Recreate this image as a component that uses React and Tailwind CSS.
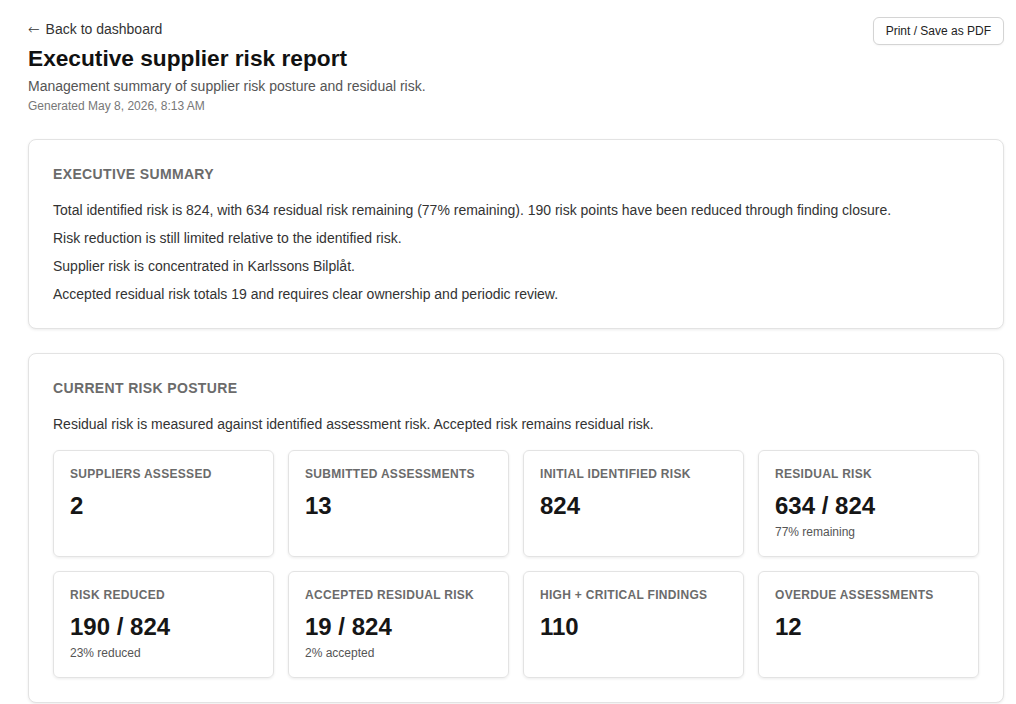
import React from "react";

const summary = [
  "Total identified risk is 824, with 634 residual risk remaining (77% remaining). 190 risk points have been reduced through finding closure.",
  "Risk reduction is still limited relative to the identified risk.",
  "Supplier risk is concentrated in Karlssons Bilplåt.",
  "Accepted residual risk totals 19 and requires clear ownership and periodic review.",
];

const stats = [
  { label: "Suppliers assessed", value: "2" },
  { label: "Submitted assessments", value: "13" },
  { label: "Initial identified risk", value: "824" },
  { label: "Residual risk", value: "634 / 824", note: "77% remaining" },
  { label: "Risk reduced", value: "190 / 824", note: "23% reduced" },
  { label: "Accepted residual risk", value: "19 / 824", note: "2% accepted" },
  { label: "High + critical findings", value: "110" },
  { label: "Overdue assessments", value: "12" },
];

// Carte de section
const Section = ({ title, children, className = "" }) => (
  <section className={`bg-white border border-[#e3e3e3] rounded-lg shadow-[0_1px_3px_rgba(0,0,0,0.08)] px-6 pt-6 pb-6 ${className}`}>
    <h2 className="text-[14px] leading-5 font-bold uppercase tracking-wide text-[#6b6b6b]">{title}</h2>
    {children}
  </section>
);

const StatCard = ({ stat }) => (
  <div className="border border-[#e3e3e3] rounded-md shadow-[0_1px_3px_rgba(0,0,0,0.08)] px-4 pt-[15px] pb-4">
    <div className="text-[12px] leading-4 font-bold uppercase tracking-wide text-[#6b6b6b]">{stat.label}</div>
    <div className="mt-2 text-[24px] leading-8 font-bold text-[#161616]">{stat.value}</div>
    {stat.note && <div className="mt-0.5 text-[12px] leading-4 text-[#555]">{stat.note}</div>}
  </div>
);

export default function App() {
  return (
    <div className="min-h-screen bg-white font-['Liberation_Sans',Arial,sans-serif] text-[#333] pl-[28px] pr-[12px] pt-[19px] pb-10">
      <header className="flex justify-between items-start">
        <div>
          <a href="#" className="block text-[14px] leading-5 text-[#333]">
            <span className="font-['DejaVu_Sans',sans-serif] font-light mr-0.5">←</span> Back to dashboard
          </a>
          <h1 className="mt-[3px] text-[22.7px] leading-8 font-bold text-[#111]">Executive supplier risk report</h1>
          <p className="mt-[2px] text-[14px] leading-5 text-[#555]">Management summary of supplier risk posture and residual risk.</p>
          <p className="mt-0.5 text-[12px] leading-4 text-[#777]">Generated May 8, 2026, 8:13 AM</p>
        </div>
        <button className="mt-[-2px] h-7 px-3 border border-[#d4d4d4] rounded-md bg-white text-[12px] text-[#222] shadow-[0_1px_2px_rgba(0,0,0,0.04)]">
          Print / Save as PDF
        </button>
      </header>

      <Section title="Executive summary" className="mt-[25px]">
        <div className="mt-4 space-y-2">
          {summary.map((s) => (
            <p key={s} className="text-[14px] leading-5 text-[#333]">{s}</p>
          ))}
        </div>
      </Section>

      <Section title="Current risk posture" className="mt-6">
        <p className="mt-4 text-[14px] leading-5 text-[#333]">
          Residual risk is measured against identified assessment risk. Accepted risk remains residual risk.
        </p>
        <div className="mt-4 grid grid-cols-4 gap-3.5">
          {stats.map((s) => (
            <StatCard key={s.label} stat={s} />
          ))}
        </div>
      </Section>
    </div>
  );
}
